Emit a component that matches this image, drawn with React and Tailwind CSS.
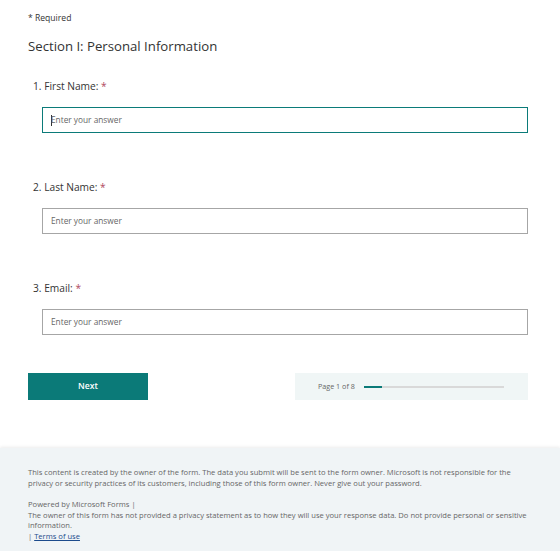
import React from "react";

const font = { fontFamily: "'Open Sans', 'Noto Sans', sans-serif" };

function Question({ num, label, focused }) {
  return (
    <div>
      <div className="pl-[5px] text-[10.2px] text-[#333] leading-[16px] mb-[13px]">
        {num}. {label}: <span className="text-[#b04a5e]">*</span>
      </div>
      <div
        className={
          "ml-[14px] h-[26px] flex items-center px-[8px] text-[8.3px] text-[#666] bg-white " +
          (focused ? "border-[1.5px] border-[#0b7b79]" : "border border-[#a6a6a6]")
        }
      >
        {focused && <span className="w-px h-[11px] bg-[#333] mr-[-1px]"></span>}
        Enter your answer
      </div>
    </div>
  );
}

export default function App() {
  return (
    <div className="w-[560px] h-[551px] bg-white flex flex-col overflow-hidden" style={font}>
      {/* form body */}
      <div className="pl-[28px] pr-[32px] pt-[11px]">
        <p className="text-[8.6px] text-[#333] leading-[14px]">* Required</p>
        <h2 className="mt-[11px] text-[13.2px] text-[#333] leading-[20px]">
          Section I: Personal Information
        </h2>
        <div className="mt-[22px] flex flex-col gap-[46px]">
          <Question num={1} label="First Name" focused />
          <Question num={2} label="Last Name" />
          <Question num={3} label="Email" />
        </div>
        <div className="flex justify-between mt-[38px]">
          <button className="w-[120px] h-[27px] bg-[#0b7a78] text-white text-[8.6px] font-semibold">
            Next
          </button>
          <div className="w-[233px] h-[27px] bg-[#f0f6f6] flex items-center pl-[23px]">
            <span className="text-[7.2px] text-[#666]">Page 1 of 8</span>
            <div className="ml-[9px] w-[140px] h-[2px] bg-[#d9d9d9]">
              <div className="w-[18px] h-[2px] bg-[#0b7a78]"></div>
            </div>
          </div>
        </div>
      </div>

      {/* footer */}
      <div className="mt-[48px] flex-1 bg-[#f0f4f6] shadow-[0_-1px_3px_rgba(0,0,0,0.08)] pl-[28px] pr-[32px] pt-[19px] text-[7.6px] leading-[10.5px] text-[#666]">
        <p>
          This content is created by the owner of the form. The data you submit will be sent to the
          form owner. Microsoft is not responsible for the privacy or security practices of its
          customers, including those of this form owner. Never give out your password.
        </p>
        <p className="mt-[11px]">Powered by Microsoft Forms |</p>
        <p>
          The owner of this form has not provided a privacy statement as to how they will use your
          response data. Do not provide personal or sensitive information.
        </p>
        <p>
          | <span className="underline text-[#1c4b8c]">Terms of use</span>
        </p>
      </div>
    </div>
  );
}
